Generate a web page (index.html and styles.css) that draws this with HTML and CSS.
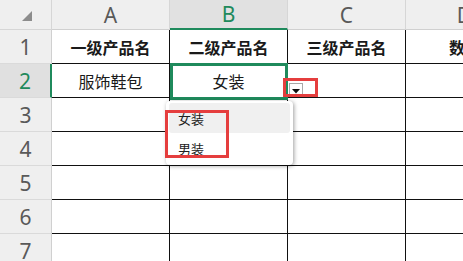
FILE: index.html
```html
<!DOCTYPE html>
<html lang="zh">
<head>
<meta charset="utf-8">
<link rel="stylesheet" href="styles.css">
</head>
<body>
<div class="sheet">
  <div class="grid">
    <div class="corner"><svg class="corner-tri" width="10" height="10" viewBox="0 0 10 10"><polygon points="10,0 10,10 0,10" fill="#8c8c8c"/></svg></div>
    <div class="colhead">A</div>
    <div class="colhead active">B</div>
    <div class="colhead">C</div>
    <div class="colhead">D</div>

    <div class="rowhead">1</div>
    <div class="cell bold">一级产品名</div>
    <div class="cell bold">二级产品名</div>
    <div class="cell bold">三级产品名</div>
    <div class="cell bold clip">数</div>

    <div class="rowhead active">2</div>
    <div class="cell">服饰鞋包</div>
    <div class="cell">女装</div>
    <div class="cell"></div>
    <div class="cell"></div>

    <div class="rowhead">3</div>
    <div class="cell"></div><div class="cell"></div><div class="cell"></div><div class="cell"></div>
    <div class="rowhead">4</div>
    <div class="cell"></div><div class="cell"></div><div class="cell"></div><div class="cell"></div>
    <div class="rowhead">5</div>
    <div class="cell"></div><div class="cell"></div><div class="cell"></div><div class="cell"></div>
    <div class="rowhead">6</div>
    <div class="cell"></div><div class="cell"></div><div class="cell"></div><div class="cell"></div>
    <div class="rowhead">7</div>
    <div class="cell"></div><div class="cell"></div><div class="cell"></div><div class="cell"></div>
  </div>

  <div class="selection"></div>
  <div class="dd-btn"><svg width="8" height="5" viewBox="0 0 8 5"><polygon points="0,0 8,0 4,4.5" fill="#111"/></svg></div>
  <div class="popup">
    <div class="item hover">女装</div>
    <div class="item">男装</div>
  </div>
  <div class="mark mark-btn"></div>
  <div class="mark mark-list"></div>
</div>
</body>
</html>
```

FILE: styles.css
```css
html, body {
  margin: 0;
  padding: 0;
  background: #ffffff;
  overflow: hidden;
}
.sheet {
  position: relative;
  width: 463px;
  height: 261px;
  overflow: hidden;
  font-family: "Noto Sans", "Noto Sans CJK SC", sans-serif;
}
.grid {
  display: grid;
  grid-template-columns: 52px 118px 118px 118px 118px;
  grid-template-rows: 30px repeat(7, 34px);
}
.corner {
  background: #efefef;
  border-right: 1px solid #d6d6d6;
  border-bottom: 1px solid #d6d6d6;
  box-sizing: border-box;
  position: relative;
}
.corner-tri {
  position: absolute;
  left: 22px;
  top: 11px;
}
.colhead {
  background: #efefef;
  border-right: 1px solid #d6d6d6;
  border-bottom: 1px solid #d0d0d0;
  box-sizing: border-box;
  display: flex;
  align-items: center;
  justify-content: center;
  font-size: 21px;
  color: #595959;
}
.colhead.active {
  background: #e1e1e1;
  color: #1f8a5c;
  border-bottom: 2px solid #1f8a5c;
}
.rowhead {
  background: #efefef;
  border-right: 1px solid #d0d0d0;
  border-bottom: 1px solid #dadada;
  box-sizing: border-box;
  display: flex;
  align-items: center;
  justify-content: center;
  font-size: 21px;
  color: #595959;
}
.rowhead.active {
  background: #e0e0e0;
  color: #1f8a5c;
  border-right: 2px solid #1f8a5c;
}
.cell {
  border-right: 1px solid #111;
  border-bottom: 1px solid #111;
  box-sizing: border-box;
  display: flex;
  align-items: center;
  justify-content: center;
  font-family: "Noto Sans CJK SC", sans-serif;
  font-size: 16px;
  color: #1a1a1a;
  overflow: hidden;
  white-space: nowrap;
}
.cell.bold {
  font-weight: 700;
}
.cell.clip {
  justify-content: flex-start;
  padding-left: 43px;
}
.selection {
  position: absolute;
  left: 170px;
  top: 63px;
  width: 118px;
  height: 37px;
  border: 3px solid #1f8a5c;
  box-sizing: border-box;
}
.dd-btn {
  position: absolute;
  left: 289px;
  top: 83px;
  width: 14px;
  height: 13px;
  background: #fff;
  border: 1px solid #a8a8a8;
  box-sizing: border-box;
  display: flex;
  align-items: center;
  justify-content: center;
  padding-top: 3px;
}
.popup {
  position: absolute;
  left: 166px;
  top: 101px;
  width: 127px;
  background: #fff;
  border-radius: 4px;
  box-shadow: 1px 1px 4px rgba(0,0,0,0.38);
  padding: 2px 3px;
  box-sizing: border-box;
}
.item {
  height: 30px;
  display: flex;
  align-items: center;
  padding-left: 9px;
  font-family: "Noto Sans CJK SC", sans-serif;
  font-size: 13px;
  color: #222;
  border-radius: 3px;
}
.item.hover {
  background: #f0f0f0;
}
.mark {
  position: absolute;
  border: 3px solid #e53e3e;
  box-sizing: border-box;
}
.mark-btn {
  left: 283px;
  top: 78px;
  width: 35px;
  height: 19px;
}
.mark-list {
  left: 165px;
  top: 110px;
  width: 64px;
  height: 48px;
}
```
